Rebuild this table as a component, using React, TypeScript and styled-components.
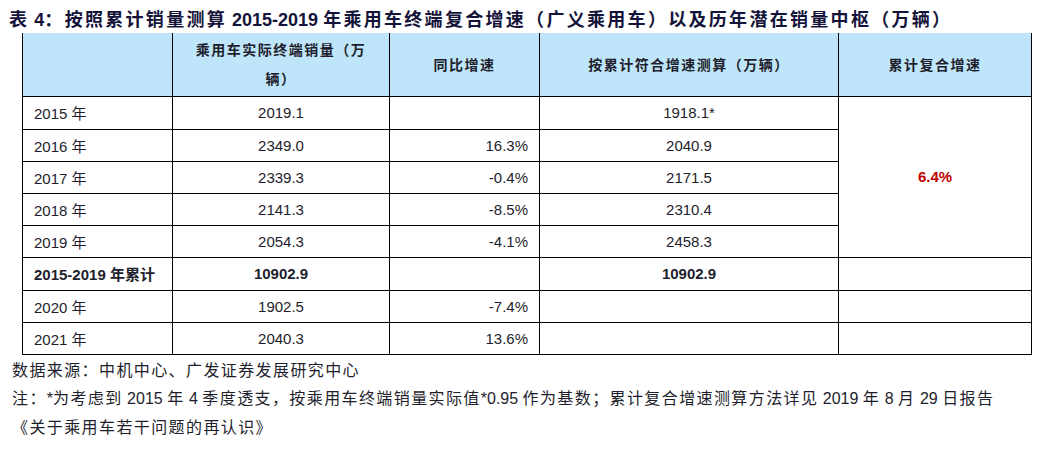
import React from "react"
import styled, { createGlobalStyle } from "styled-components"

const GlobalStyle = createGlobalStyle`
  html, body {
    margin: 0;
    padding: 0;
    background: #ffffff;
  }
  body {
    font-family: "Liberation Sans", Arial, "Noto Sans CJK SC", sans-serif;
    color: #1e1e2c;
  }
`

const CJK_RUN = /([\u3000-\u303f\u4e00-\u9fff\uff00-\uffef]+)/

const Page = styled.div`
  width: 1040px;
  height: 449px;
  padding: 7px 0 0 9px;
  box-sizing: border-box;
  overflow: hidden;
`

const Title = styled.h1`
  margin: 0;
  height: 22px;
  font-size: 18px;
  line-height: 22px;
  font-weight: bold;
  color: #14143a;
  white-space: nowrap;
`

const Wide = styled.span<{ $space: number }>`
  font-family: "Noto Sans CJK SC", sans-serif;
  letter-spacing: ${(p) => p.$space}px;
`

const Table = styled.table`
  margin: 4px 0 0 13px;
  width: 1009px;
  border-collapse: collapse;
  table-layout: fixed;
  font-size: 15px;
`

const HeadRow = styled.tr`
  background: #bee5f9;
  height: 63px;
`

const HeadCell = styled.th`
  border-left: 1px solid #000;
  border-right: 1px solid #000;
  border-bottom: 1px solid #000;
  padding: 0 14px;
  font-size: 14px;
  line-height: 28px;
  font-weight: 600;
  color: #1e1e2c;
  text-align: center;
  vertical-align: middle;
`

const Row = styled.tr<{ $h: number }>`
  height: ${(p) => p.$h}px;
`

const Cell = styled.td<{ $align?: "left" | "center" | "right"; $bold?: boolean; $red?: boolean }>`
  border: 1px solid #000;
  padding: 0 11px;
  text-align: ${(p) => p.$align || "center"};
  font-weight: ${(p) => (p.$bold || p.$red ? "bold" : "normal")};
  color: ${(p) => (p.$red ? "#c00000" : "#1e1e2c")};
  vertical-align: middle;
  white-space: nowrap;
`

const Notes = styled.div`
  margin-left: 3px;
  font-size: 16px;
  color: #1e1e2c;
  white-space: nowrap;
`

const NoteLine = styled.div`
  height: 28.5px;
  line-height: 28.5px;
`

function Mixed({ text, space }: { text: string; space: number }) {
  return (
    <>
      {text.split(CJK_RUN).map((part, i) =>
        CJK_RUN.test(part) ? (
          <Wide key={i} $space={space}>
            {part}
          </Wide>
        ) : (
          <React.Fragment key={i}>{part}</React.Fragment>
        )
      )}
    </>
  )
}

const rows = [
  { year: "2015 年", actual: "2019.1", yoy: "", calc: "1918.1*" },
  { year: "2016 年", actual: "2349.0", yoy: "16.3%", calc: "2040.9" },
  { year: "2017 年", actual: "2339.3", yoy: "-0.4%", calc: "2171.5" },
  { year: "2018 年", actual: "2141.3", yoy: "-8.5%", calc: "2310.4" },
  { year: "2019 年", actual: "2054.3", yoy: "-4.1%", calc: "2458.3" },
]

const later = [
  { year: "2020 年", actual: "1902.5", yoy: "-7.4%" },
  { year: "2021 年", actual: "2040.3", yoy: "13.6%" },
]

export default function App() {
  return (
    <Page>
      <GlobalStyle />
      <Title>
        <Mixed
          text="表 4：按照累计销量测算 2015-2019 年乘用车终端复合增速（广义乘用车）以及历年潜在销量中枢（万辆）"
          space={2.3}
        />
      </Title>
      <Table>
        <colgroup>
          <col style={{ width: 150 }} />
          <col style={{ width: 217 }} />
          <col style={{ width: 150 }} />
          <col style={{ width: 299 }} />
          <col style={{ width: 193 }} />
        </colgroup>
        <thead>
          <HeadRow>
            <HeadCell />
            <HeadCell>
              <Mixed text="乘用车实际终端销量（万辆）" space={1.5} />
            </HeadCell>
            <HeadCell>
              <Mixed text="同比增速" space={1.5} />
            </HeadCell>
            <HeadCell>
              <Mixed text="按累计符合增速测算（万辆）" space={1.5} />
            </HeadCell>
            <HeadCell>
              <Mixed text="累计复合增速" space={1.5} />
            </HeadCell>
          </HeadRow>
        </thead>
        <tbody>
          {rows.map((r, i) => (
            <Row key={r.year} $h={i === 0 ? 33 : 32}>
              <Cell $align="left">
                <Mixed text={r.year} space={0} />
              </Cell>
              <Cell>{r.actual}</Cell>
              <Cell $align="right">{r.yoy}</Cell>
              <Cell>{r.calc}</Cell>
              {i === 0 && (
                <Cell rowSpan={5} $red>
                  6.4%
                </Cell>
              )}
            </Row>
          ))}
          <Row $h={33}>
            <Cell $align="left" $bold>
              <Mixed text="2015-2019 年累计" space={0} />
            </Cell>
            <Cell $bold>10902.9</Cell>
            <Cell $align="right" />
            <Cell $bold>10902.9</Cell>
            <Cell />
          </Row>
          {later.map((r) => (
            <Row key={r.year} $h={32}>
              <Cell $align="left">
                <Mixed text={r.year} space={0} />
              </Cell>
              <Cell>{r.actual}</Cell>
              <Cell $align="right">{r.yoy}</Cell>
              <Cell />
              <Cell />
            </Row>
          ))}
        </tbody>
      </Table>
      <Notes>
        <NoteLine>
          <Mixed text="数据来源：中机中心、广发证券发展研究中心" space={1.4} />
        </NoteLine>
        <NoteLine>
          <Mixed
            text="注：*为考虑到 2015 年 4 季度透支，按乘用车终端销量实际值*0.95 作为基数；累计复合增速测算方法详见 2019 年 8 月 29 日报告"
            space={1.4}
          />
        </NoteLine>
        <NoteLine>
          <Mixed text="《关于乘用车若干问题的再认识》" space={1.4} />
        </NoteLine>
      </Notes>
    </Page>
  )
}
